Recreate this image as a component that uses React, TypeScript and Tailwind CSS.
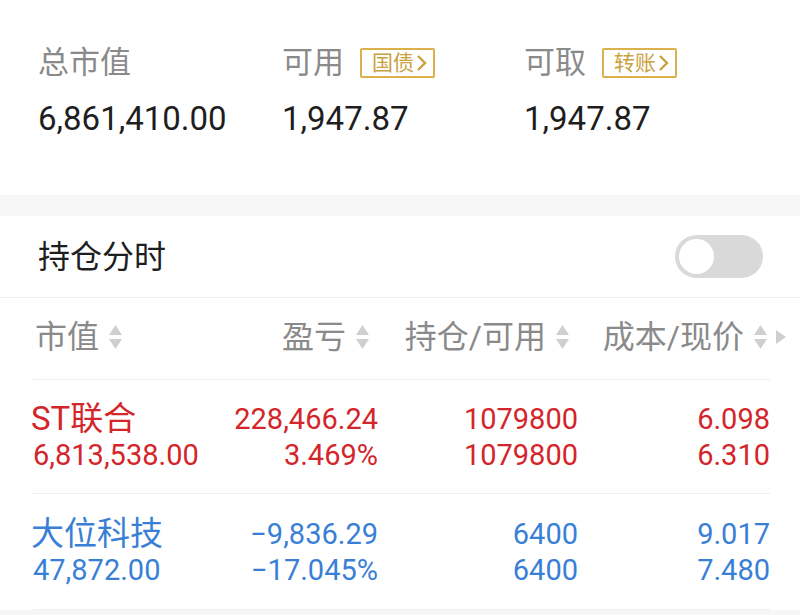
import React from "react";

const FONT = { fontFamily: 'Roboto, "Noto Sans CJK SC", sans-serif' };

function SortIcon() {
  return (
    <svg width="15" height="28" viewBox="0 0 15 28" className="ml-[9px] shrink-0">
      <path d="M7.5 2 L14 12 L1 12 Z" fill="#cfcfcf" />
      <path d="M1 16 L14 16 L7.5 26 Z" fill="#cfcfcf" />
    </svg>
  );
}

function Badge({ text }: { text: string }) {
  return (
    <span className="ml-[16px] inline-flex h-[30px] items-center rounded-[2px] border-2 border-[#dcb04a] pl-[10px] pr-[5px] text-[21px] leading-none text-[#c9a13f]">
      {text}
      <svg width="12" height="18" viewBox="0 0 12 18" className="ml-[2px]">
        <path d="M2 2 L9 9 L2 16" fill="none" stroke="#c9a13f" strokeWidth="2.4" />
      </svg>
    </span>
  );
}

const rows = [
  {
    name: "ST联合",
    mv: "6,813,538.00",
    pl: "228,466.24",
    pct: "3.469%",
    pos: "1079800",
    avail: "1079800",
    cost: "6.098",
    price: "6.310",
    color: "text-[#d3252a]",
  },
  {
    name: "大位科技",
    mv: "47,872.00",
    pl: "−9,836.29",
    pct: "−17.045%",
    pos: "6400",
    avail: "6400",
    cost: "9.017",
    price: "7.480",
    color: "text-[#3a7fd6]",
  },
];

export default function App() {
  return (
    <div className="h-[615px] w-[800px] overflow-hidden bg-white" style={FONT}>
      {/* account summary */}
      <div className="grid h-[195px] grid-cols-[244px_242px_1fr] pl-[38px] pt-[44px]">
        <div>
          <div className="flex h-[38px] items-center text-[31px] text-[#8a8a8a]">总市值</div>
          <div className="mt-[18px] text-[33px] leading-[38px] text-[#1e1e1e]">6,861,410.00</div>
        </div>
        <div>
          <div className="flex h-[38px] items-center text-[31px] text-[#8a8a8a]">
            可用
            <Badge text="国债" />
          </div>
          <div className="mt-[18px] text-[33px] leading-[38px] text-[#1e1e1e]">1,947.87</div>
        </div>
        <div>
          <div className="flex h-[38px] items-center text-[31px] text-[#8a8a8a]">
            可取
            <Badge text="转账" />
          </div>
          <div className="mt-[18px] text-[33px] leading-[38px] text-[#1e1e1e]">1,947.87</div>
        </div>
      </div>

      <div className="h-[21px] bg-[#f6f6f6]" />

      {/* toggle row */}
      <div className="flex h-[82px] items-center justify-between border-b border-[#eeeeee] pl-[38px] pr-[37px]">
        <span className="text-[32px] text-[#1e1e1e]">持仓分时</span>
        <div className="flex h-[43px] w-[88px] items-center rounded-full bg-[#d9d9d9] px-[4px]">
          <div className="h-[35px] w-[35px] rounded-full bg-white" />
        </div>
      </div>

      {/* table */}
      <div className="relative ml-[33px] mr-[30px]">
        <div className="grid h-[82px] grid-cols-[170px_175px_200px_192px] items-center border-b border-[#eeeeee] pb-[3px] text-[32px] text-[#8a8a8a]">
          <div className="flex items-center pl-[2px]">
            市值
            <SortIcon />
          </div>
          <div className="flex items-center justify-end pr-[8px]">
            盈亏
            <SortIcon />
          </div>
          <div className="flex items-center justify-end pr-[8px]">
            持仓/可用
            <SortIcon />
          </div>
          <div className="flex items-center justify-end pr-[2px]">
            成本/现价
            <SortIcon />
          </div>
          <svg width="10" height="14" viewBox="0 0 10 14" className="absolute right-[-16px] top-[32px]">
            <path d="M0 0 L10 7 L0 14 Z" fill="#cfcfcf" />
          </svg>
        </div>

        {rows.map((r, i) => (
          <div
            key={r.name}
            className={`grid grid-cols-[170px_175px_200px_192px] items-center border-b border-[#eeeeee] ${r.color} ${
              i === 0 ? "h-[114px]" : "h-[116px]"
            }`}
          >
            <div className="flex flex-col">
              <span className="-ml-[2px] text-[33px] leading-[36px]">{r.name}</span>
              <span className="text-[29px] leading-[36px]">{r.mv}</span>
            </div>
            <div className="flex flex-col items-end text-[29px] leading-[36px]">
              <span>{r.pl}</span>
              <span>{r.pct}</span>
            </div>
            <div className="flex flex-col items-end text-[29px] leading-[36px]">
              <span>{r.pos}</span>
              <span>{r.avail}</span>
            </div>
            <div className="flex flex-col items-end text-[29px] leading-[36px]">
              <span>{r.cost}</span>
              <span>{r.price}</span>
            </div>
          </div>
        ))}
      </div>
      <div className="h-[20px] bg-[#f6f6f6]" />
    </div>
  );
}
